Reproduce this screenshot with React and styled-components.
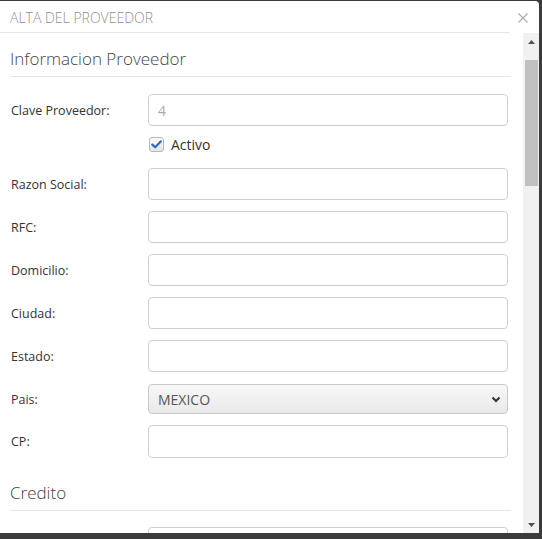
import React from "react";
import styled, { createGlobalStyle } from "styled-components";

const Global = createGlobalStyle`
  html, body { margin: 0; padding: 0; }
  body {
    background: #3b3b3b;
    width: 542px;
    height: 539px;
    overflow: hidden;
    font-family: "Open Sans", "Liberation Sans", sans-serif;
  }
`;

const Dialog = styled.div`
  margin-top: 1px;
  width: 539px;
  height: 532px;
  background: #fff;
  border-radius: 0 4px 0 0;
  display: flex;
  flex-direction: column;
  overflow: hidden;
`;

const Header = styled.div`
  height: 32px;
  flex: none;
  display: flex;
  align-items: center;
  justify-content: space-between;
  padding: 0 10px 0 10px;
  box-sizing: border-box;
  background-image: linear-gradient(#e5e5e5, #e5e5e5);
  background-repeat: no-repeat;
  background-size: 510px 1px;
  background-position: left bottom;
`;

const Title = styled.div`
  font-size: 14px;
  font-weight: 300;
  color: #8f8f8f;
  padding-top: 1px;
`;

const Close = styled.div`
  width: 10px;
  height: 10px;
  display: flex;
  margin-right: 1px;
  margin-top: 1px;
`;

const Body = styled.div`
  flex: 1;
  display: flex;
  min-height: 0;
`;

const Content = styled.div`
  width: 523px;
  box-sizing: border-box;
  padding: 0 12px 0 10px;
  overflow: hidden;
`;

const Legend = styled.div`
  margin-top: ${(p) => p.$top}px;
  font-size: 17px;
  font-weight: 300;
  color: #444;
  line-height: 24px;
  padding-bottom: 5px;
  border-bottom: 1px solid #e5e5e5;
  width: 501px;
`;

const Row = styled.div`
  display: grid;
  grid-template-columns: 138px 360px;
  align-items: center;
  margin-top: ${(p) => p.$top}px;
`;

const Label = styled.label`
  font-size: 12.5px;
  color: #333;
  padding-left: 1px;
`;

const Input = styled.div`
  box-sizing: border-box;
  height: ${(p) => p.$h || 32}px;
  border: 1px solid #cfcfcf;
  border-radius: 4px;
  background: #fff;
  display: flex;
  align-items: center;
  padding-left: 9px;
  font-size: 14px;
  color: #aaa;
`;

const Select = styled.div`
  box-sizing: border-box;
  height: 30px;
  border: 1px solid #c8c8c8;
  border-radius: 4px;
  background: linear-gradient(#f7f7f7, #e9e9e9);
  display: flex;
  align-items: center;
  justify-content: space-between;
  padding: 0 6px 0 9px;
  font-size: 14px;
  color: #555;
`;

const CheckRow = styled.div`
  display: flex;
  align-items: center;
  gap: 7px;
  margin-top: 8px;
  margin-left: 139px;
  height: 20px;
`;

const CheckBox = styled.span`
  width: 15px;
  height: 15px;
  box-sizing: border-box;
  border: 1px solid #b9b9b9;
  border-radius: 3px;
  background: linear-gradient(#fdfdfd, #e4e4e4);
  display: flex;
  align-items: center;
  justify-content: center;
`;

const CheckText = styled.span`
  font-size: 14px;
  color: #333;
`;

const Scrollbar = styled.div`
  width: 16px;
  flex: none;
  background: #f1f1f1;
  display: flex;
  flex-direction: column;
  align-items: center;
`;

const Arrow = styled.div`
  height: 17px;
  width: 16px;
  display: flex;
  align-items: center;
  justify-content: center;
`;

const Thumb = styled.div`
  width: 13px;
  margin-left: 1px;
  height: 126px;
  background: #c1c1c1;
  margin-top: 10px;
`;

const Spacer = styled.div`
  flex: 1;
`;

const fields = [
  ["Razon Social:", 14],
  ["RFC:", 11],
  ["Domicilio:", 11],
  ["Ciudad:", 11],
  ["Estado:", 11],
];

export default function App() {
  return (
    <>
      <Global />
      <Dialog>
        <Header>
          <Title>ALTA DEL PROVEEDOR</Title>
          <Close>
            <svg width="10" height="10" viewBox="0 0 10 10">
              <path d="M0.5 0.5L9.5 9.5M9.5 0.5L0.5 9.5" stroke="#a8a8a8" strokeWidth="1.1" />
            </svg>
          </Close>
        </Header>
        <Body>
          <Content>
            <Legend $top={14}>Informacion Proveedor</Legend>
            <Row $top={17}>
              <Label>Clave Proveedor:</Label>
              <Input>4</Input>
            </Row>
            <CheckRow>
              <CheckBox>
                <svg width="11" height="9" viewBox="0 0 11 9">
                  <path d="M1.3 4.6L4.2 7.3L9.7 1.4" stroke="#2a6ebf" strokeWidth="2.2" fill="none" strokeLinecap="round" strokeLinejoin="round" />
                </svg>
              </CheckBox>
              <CheckText>Activo</CheckText>
            </CheckRow>
            {fields.map(([l, t]) => (
              <Row key={l} $top={t}>
                <Label>{l}</Label>
                <Input />
              </Row>
            ))}
            <Row $top={12}>
              <Label>Pais:</Label>
              <Select>
                <span>MEXICO</span>
                <svg width="10" height="7" viewBox="0 0 10 7">
                  <path d="M1.5 1.5L5 5L8.5 1.5" stroke="#333" strokeWidth="2" fill="none" />
                </svg>
              </Select>
            </Row>
            <Row $top={11}>
              <Label>CP:</Label>
              <Input $h={33} />
            </Row>
            <Legend $top={23}>Credito</Legend>
            <Row $top={16}>
              <Label />
              <Input />
            </Row>
          </Content>
          <Scrollbar>
            <Arrow>
              <svg width="7" height="4" viewBox="0 0 7 4">
                <path d="M0 4L3.5 0L7 4Z" fill="#505050" />
              </svg>
            </Arrow>
            <Thumb />
            <Spacer />
            <Arrow>
              <svg width="7" height="4" viewBox="0 0 7 4">
                <path d="M0 0L3.5 4L7 0Z" fill="#505050" />
              </svg>
            </Arrow>
          </Scrollbar>
        </Body>
      </Dialog>
    </>
  );
}
